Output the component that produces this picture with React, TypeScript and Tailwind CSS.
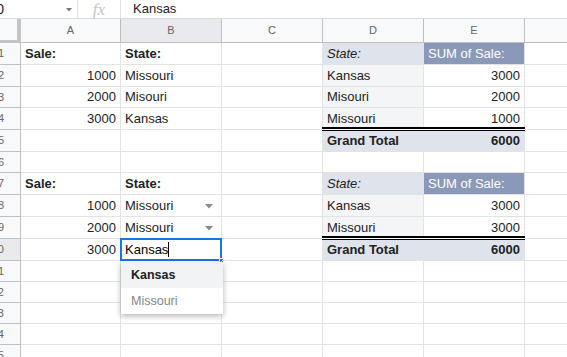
import type { ReactNode } from 'react';

type CellSpec = {
  text?: ReactNode;
  align?: 'left' | 'right';
  bold?: boolean;
  className?: string;
  arrow?: boolean;
};

type RowSpec = {
  n: number;
  h: 'h-[22px]' | 'h-[21px]';
  a?: CellSpec;
  b?: CellSpec;
  d?: CellSpec;
  e?: CellSpec;
  active?: boolean;
};

const pivotHeadD = 'bg-[#dfe3eb] italic text-[#222]';
const pivotHeadE = 'bg-[#8b99b9] text-white';
const pivotBodyD = 'bg-[#f4f5f7]';
const pivotTotal = 'bg-[#dfe3eb] font-bold';

const rows: RowSpec[] = [
  {
    n: 1, h: 'h-[22px]',
    a: { text: 'Sale:', bold: true }, b: { text: 'State:', bold: true },
    d: { text: 'State:', className: pivotHeadD }, e: { text: 'SUM of Sale:', className: pivotHeadE },
  },
  {
    n: 2, h: 'h-[22px]',
    a: { text: '1000', align: 'right' }, b: { text: 'Missouri' },
    d: { text: 'Kansas', className: pivotBodyD }, e: { text: '3000', align: 'right' },
  },
  {
    n: 3, h: 'h-[21px]',
    a: { text: '2000', align: 'right' }, b: { text: 'Misouri' },
    d: { text: 'Misouri', className: pivotBodyD }, e: { text: '2000', align: 'right' },
  },
  {
    n: 4, h: 'h-[22px]',
    a: { text: '3000', align: 'right' }, b: { text: 'Kansas' },
    d: { text: 'Missouri', className: pivotBodyD }, e: { text: '1000', align: 'right' },
  },
  {
    n: 5, h: 'h-[22px]',
    d: { text: 'Grand Total', className: pivotTotal + ' total' }, e: { text: '6000', align: 'right', className: pivotTotal + ' total' },
  },
  { n: 6, h: 'h-[21px]' },
  {
    n: 7, h: 'h-[22px]',
    a: { text: 'Sale:', bold: true }, b: { text: 'State:', bold: true },
    d: { text: 'State:', className: pivotHeadD }, e: { text: 'SUM of Sale:', className: pivotHeadE },
  },
  {
    n: 8, h: 'h-[22px]',
    a: { text: '1000', align: 'right' }, b: { text: 'Missouri', arrow: true },
    d: { text: 'Kansas', className: pivotBodyD }, e: { text: '3000', align: 'right' },
  },
  {
    n: 9, h: 'h-[22px]',
    a: { text: '2000', align: 'right' }, b: { text: 'Missouri', arrow: true },
    d: { text: 'Missouri', className: pivotBodyD }, e: { text: '3000', align: 'right' },
  },
  {
    n: 10, h: 'h-[22px]', active: true,
    a: { text: '3000', align: 'right' },
    d: { text: 'Grand Total', className: pivotTotal + ' total' }, e: { text: '6000', align: 'right', className: pivotTotal + ' total' },
  },
  { n: 11, h: 'h-[21px]' },
  { n: 12, h: 'h-[21px]' },
  { n: 13, h: 'h-[21px]' },
  { n: 14, h: 'h-[21px]' },
  { n: 15, h: 'h-[21px]' },
];

const gridCols = 'grid grid-cols-[21px_100px_101px_101px_101px_101px_1fr]';

function Arrow() {
  return (
    <svg width="8" height="5" viewBox="0 0 8 5" className="absolute right-[8px] top-[9px]">
      <path d="M0 0h8L4 4.5z" fill="#8a8a8a" />
    </svg>
  );
}

function Cell({ spec }: { spec?: CellSpec }) {
  const isTotal = spec?.className?.includes('total');
  return (
    <div
      className={
        'relative flex items-center px-[4px] border-r border-b border-[#e2e3e3] whitespace-nowrap overflow-visible text-[13px] text-[#222] ' +
        (spec?.align === 'right' ? 'justify-end ' : 'justify-start ') +
        (spec?.bold ? 'font-bold ' : '') +
        (spec?.className ?? '')
      }
    >
      {isTotal && (
        <div className="absolute left-[-1px] right-[-1px] top-[-3px] h-[4px] border-y-2 border-b border-black bg-white" />
      )}
      {spec?.text}
      {spec?.arrow && <Arrow />}
    </div>
  );
}

function ActiveCell() {
  return (
    <div className="relative flex items-center px-[4px] border-r border-b border-[#e2e3e3] text-[13px] text-black">
      <div className="absolute left-[-1px] top-[-1px] right-[-1px] bottom-[-1px] border-2 border-[#1a73e8]" />
      <div className="absolute right-[-3px] bottom-[-3px] w-[5px] h-[5px] bg-[#1a73e8] border border-white" />
      <span>Kansas</span>
      <span className="inline-block w-px h-[15px] bg-black" />
      <div className="absolute left-0 top-[23px] w-[102px] bg-white shadow-[0_2px_6px_rgba(0,0,0,0.3)] z-10">
        <div className="h-[26px] flex items-center pl-[10px] bg-[#f1f3f4] text-[12.5px] font-semibold text-[#202124]">
          Kansas
        </div>
        <div className="h-[26px] flex items-center pl-[10px] text-[12.5px] text-[#80868b]">
          Missouri
        </div>
      </div>
    </div>
  );
}

export default function App() {
  return (
    <div className="w-[567px] h-[357px] overflow-hidden bg-white font-['Liberation_Sans',Arial,sans-serif] select-none">
      {/* formula bar */}
      <div className="h-[19px] flex items-center border-b border-[#dadce0] text-[13px]">
        <div className="w-[78px] h-full relative flex items-center border-r border-[#e0e0e0]">
          <span className="absolute right-[73px] text-[14px] text-[#222]">B10</span>
          <svg width="6" height="4" viewBox="0 0 6 4" className="absolute left-[66px] top-[8px]">
            <path d="M0 0h6L3 3.5z" fill="#7a7a7a" />
          </svg>
        </div>
        <div className="w-[43px] h-full flex items-center justify-center border-r border-[#e0e0e0]">
          <span className="font-['Liberation_Serif',serif] italic text-[17px] text-[#c4c4c4] leading-none">fx</span>
        </div>
        <div className="pl-[12px] text-[13px] text-[#222]">Kansas</div>
      </div>

      {/* column headers */}
      <div className={gridCols + ' h-[24px] text-[11px] text-[#666]'}>
        <div className="bg-[#f8f9fa] border-r-[4px] border-b-[3px] border-[#c4c4c4]" />
        <div className="flex items-center justify-center bg-[#f8f9fa] border-r border-b border-[#c0c0c0]">A</div>
        <div className="flex items-center justify-center bg-[#e8eaed] border-r border-b border-[#c0c0c0]">B</div>
        <div className="flex items-center justify-center bg-[#f8f9fa] border-r border-b border-[#c0c0c0]">C</div>
        <div className="flex items-center justify-center bg-[#f8f9fa] border-r border-b border-[#c0c0c0]">D</div>
        <div className="flex items-center justify-center bg-[#f8f9fa] border-r border-b border-[#c0c0c0]">E</div>
        <div className="bg-[#f8f9fa] border-b border-[#c0c0c0]" />
      </div>

      {/* rows */}
      {rows.map((r) => (
        <div key={r.n} className={gridCols + ' ' + r.h}>
          <div
            className={
              'flex items-center justify-end pr-[16px] overflow-hidden whitespace-nowrap text-[11px] text-[#666] border-r border-b border-[#c0c0c0] ' +
              (r.active ? 'bg-[#e8eaed]' : 'bg-[#f8f9fa]')
            }
          >
            {r.n}
          </div>
          <Cell spec={r.a} />
          {r.active ? <ActiveCell /> : <Cell spec={r.b} />}
          <Cell />
          <Cell spec={r.d} />
          <Cell spec={r.e} />
          <div className="border-b border-[#e2e3e3]" />
        </div>
      ))}
    </div>
  );
}
